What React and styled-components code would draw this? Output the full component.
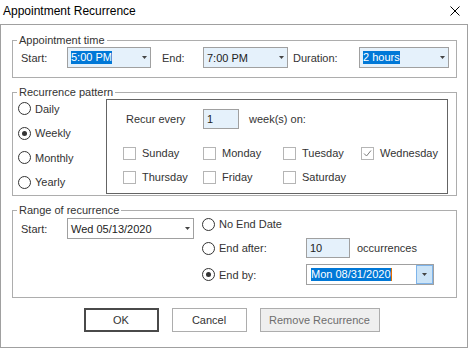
import React from 'react';
import styled, { createGlobalStyle } from 'styled-components';

const GlobalStyle = createGlobalStyle`
  body {
    margin: 0;
    background: #fff;
    font-family: "Liberation Sans", Arial, sans-serif;
    font-size: 11px;
    color: #333;
  }
`;

const Window = styled.div`
  width: 469px;
  height: 349px;
  background: #fff;
`;

const TitleBar = styled.div`
  height: 24px;
  box-sizing: border-box;
  display: flex;
  align-items: center;
  justify-content: space-between;
  padding: 0 9px 2px 3px;
  font-size: 12px;
  color: #000;
`;

const Frame = styled.div`
  width: 468px;
  height: 324px;
  box-sizing: border-box;
  border: 1px solid #a0a0a0;
  padding: 8px 10px 0 11px;
`;

const Group = styled.fieldset`
  margin: ${p => p.$gap || 0}px 0 0;
  padding: 0;
  min-width: 0;
  border: 1px solid #adadad;
`;

const Legend = styled.legend`
  margin-left: 4px;
  padding: 0 2px;
  line-height: 14px;
  font-size: 11px;
  color: #333;
`;

const TimeRow = styled.div`
  display: flex;
  align-items: center;
  height: 21px;
  padding: 0 0 9px 8px;
`;

const Label = styled.span`
  flex-shrink: 0;
  width: ${p => (p.$w ? `${p.$w}px` : 'auto')};
  margin-left: ${p => p.$ml || 0}px;
  white-space: nowrap;
`;

const Combo = styled.div`
  flex-shrink: 0;
  width: ${p => p.$w}px;
  height: 21px;
  box-sizing: border-box;
  border: 1px solid #a0a0a0;
  background: ${p => (p.$plain ? '#fff' : '#e5f1fb')};
  display: flex;
  align-items: center;
  padding-left: ${p => p.$pl || 3}px;
  color: #222;
`;

const Arrow = styled.span`
  display: flex;
  align-items: center;
  margin-left: auto;
  margin-right: 3px;
  flex-shrink: 0;
`;

const Selected = styled.span`
  background: #0078d7;
  color: #fff;
  line-height: 13px;
`;

const Caret = styled.span`
  width: 1px;
  height: 13px;
  background: #e07000;
`;

const DropButton = styled.div`
  margin-left: auto;
  width: 17px;
  height: 19px;
  box-sizing: border-box;
  border: 1px solid #7eb4ea;
  background: #cce4f7;
  display: flex;
  align-items: center;
  justify-content: center;
`;

const TextBox = styled.div`
  flex-shrink: 0;
  width: ${p => p.$w}px;
  height: 20px;
  box-sizing: border-box;
  border: 1px solid #a0a0a0;
  background: #e5f1fb;
  display: flex;
  align-items: center;
  padding-left: 3px;
  color: #222;
`;

const PatternBody = styled.div`
  display: flex;
  padding: 0 7px 1px 5px;
`;

const RadioColumn = styled.div`
  width: 88px;
  display: flex;
  flex-direction: column;
  gap: 11.5px;
  padding-top: 3px;
`;

const RadioOption = styled.label`
  display: flex;
  align-items: center;
  gap: 4px;
  flex-shrink: 0;
  width: ${p => (p.$w ? `${p.$w}px` : 'auto')};
  height: 13px;
`;

const RadioCircle = styled.span`
  width: 13px;
  height: 13px;
  box-sizing: border-box;
  border: 1px solid #333;
  border-radius: 50%;
  background: #fff;
  display: flex;
  align-items: center;
  justify-content: center;
  &::after {
    content: '';
    width: 5px;
    height: 5px;
    border-radius: 50%;
    background: ${p => (p.$checked ? '#333' : 'transparent')};
  }
`;

const WeeklyBox = styled.div`
  width: 342px;
  height: 95px;
  box-sizing: border-box;
  border: 1px solid #646464;
  padding: 9px 0 0 16px;
`;

const RecurRow = styled.div`
  display: flex;
  align-items: center;
  margin-left: 3px;
`;

const DayGrid = styled.div`
  display: grid;
  grid-template-columns: 80px 80px 78px auto;
  grid-auto-rows: 24px;
  margin-top: 12px;
`;

const DayOption = styled.label`
  display: flex;
  align-items: center;
  gap: 6px;
`;

const CheckBox = styled.span`
  width: 13px;
  height: 13px;
  box-sizing: border-box;
  border: 1px solid #b5b5b5;
  background: #fff;
  display: flex;
  align-items: center;
  justify-content: center;
`;

const RangeBody = styled.div`
  display: flex;
  align-items: flex-start;
  padding: 0 0 12px 8px;
`;

const StartField = styled.div`
  display: flex;
  align-items: center;
  margin-top: 1px;
`;

const EndOptions = styled.div`
  display: flex;
  flex-direction: column;
  margin-left: 8px;
`;

const EndRow = styled.div`
  display: flex;
  align-items: center;
  height: ${p => p.$h}px;
  margin-top: ${p => p.$mt || 0}px;
`;

const ButtonRow = styled.div`
  display: flex;
  justify-content: center;
  gap: 13px;
  margin-top: 10px;
  padding-right: 6px;
`;

const Button = styled.button`
  width: ${p => p.$w}px;
  height: 24px;
  box-sizing: border-box;
  padding: 0;
  font-family: inherit;
  font-size: 11px;
  color: ${p => (p.$muted ? '#6d6d6d' : '#333')};
  background: ${p => (p.$muted ? '#efefef' : '#fff')};
  border: ${p => (p.$primary ? '2px solid #4a4a4a' : '1px solid #adadad')};
`;

const DropArrow = ({ color = '#444' }) => (
  <svg width="5" height="3" viewBox="0 0 5 3">
    <polygon points="0,0 5,0 2.5,3" fill={color} />
  </svg>
);

const Radio = ({ checked, children, w }) => (
  <RadioOption $w={w}>
    <RadioCircle $checked={checked} />
    {children}
  </RadioOption>
);

const Day = ({ name, checked }) => (
  <DayOption>
    <CheckBox>
      {checked && (
        <svg width="9" height="9" viewBox="0 0 9 9">
          <polyline points="1,4.5 3.5,7 8,1.5" fill="none" stroke="#7a7a7a" strokeWidth="1" />
        </svg>
      )}
    </CheckBox>
    {name}
  </DayOption>
);

const days = [
  { name: 'Sunday' },
  { name: 'Monday' },
  { name: 'Tuesday' },
  { name: 'Wednesday', checked: true },
  { name: 'Thursday' },
  { name: 'Friday' },
  { name: 'Saturday' },
];

export default function App() {
  return (
    <Window>
      <GlobalStyle />
      <TitleBar>
        <span>Appointment Recurrence</span>
        <svg width="10" height="10" viewBox="0 0 10 10">
          <path d="M0.5 0.5 L9.5 9.5 M9.5 0.5 L0.5 9.5" stroke="#000" strokeWidth="1" />
        </svg>
      </TitleBar>
      <Frame>
        <Group>
          <Legend>Appointment time</Legend>
          <TimeRow>
            <Label $w={46}>Start:</Label>
            <Combo $w={84}>
              <Selected>5:00 PM</Selected>
              <Arrow><DropArrow /></Arrow>
            </Combo>
            <Label $w={41} $ml={11}>End:</Label>
            <Combo $w={85}>
              7:00 PM
              <Arrow><DropArrow /></Arrow>
            </Combo>
            <Label $w={66} $ml={5}>Duration:</Label>
            <Combo $w={90}>
              <Selected>2 hours</Selected>
              <Arrow><DropArrow /></Arrow>
            </Combo>
          </TimeRow>
        </Group>

        <Group $gap={7}>
          <Legend>Recurrence pattern</Legend>
          <PatternBody>
            <RadioColumn>
              <Radio>Daily</Radio>
              <Radio checked>Weekly</Radio>
              <Radio>Monthly</Radio>
              <Radio>Yearly</Radio>
            </RadioColumn>
            <WeeklyBox>
              <RecurRow>
                <Label $w={77}>Recur every</Label>
                <TextBox $w={36}>1</TextBox>
                <Label $ml={10}>week(s) on:</Label>
              </RecurRow>
              <DayGrid>
                {days.map(d => (
                  <Day key={d.name} name={d.name} checked={d.checked} />
                ))}
              </DayGrid>
            </WeeklyBox>
          </PatternBody>
        </Group>

        <Group $gap={7}>
          <Legend>Range of recurrence</Legend>
          <RangeBody>
            <StartField>
              <Label $w={46}>Start:</Label>
              <Combo $w={127} $plain>
                Wed 05/13/2020
                <Arrow><DropArrow /></Arrow>
              </Combo>
            </StartField>
            <EndOptions>
              <EndRow $h={14}>
                <Radio>No End Date</Radio>
              </EndRow>
              <EndRow $h={20} $mt={7}>
                <Radio w={104}>End after:</Radio>
                <TextBox $w={44}>10</TextBox>
                <Label $ml={7}>occurrences</Label>
              </EndRow>
              <EndRow $h={21} $mt={6}>
                <Radio checked w={104}>End by:</Radio>
                <Combo $w={128} $plain $pl={4}>
                  <Selected>Mon 08/31/2020</Selected>
                  <Caret />
                  <DropButton><DropArrow /></DropButton>
                </Combo>
              </EndRow>
            </EndOptions>
          </RangeBody>
        </Group>

        <ButtonRow>
          <Button $w={75} $primary>OK</Button>
          <Button $w={75}>Cancel</Button>
          <Button $w={120} $muted>Remove Recurrence</Button>
        </ButtonRow>
      </Frame>
    </Window>
  );
}
